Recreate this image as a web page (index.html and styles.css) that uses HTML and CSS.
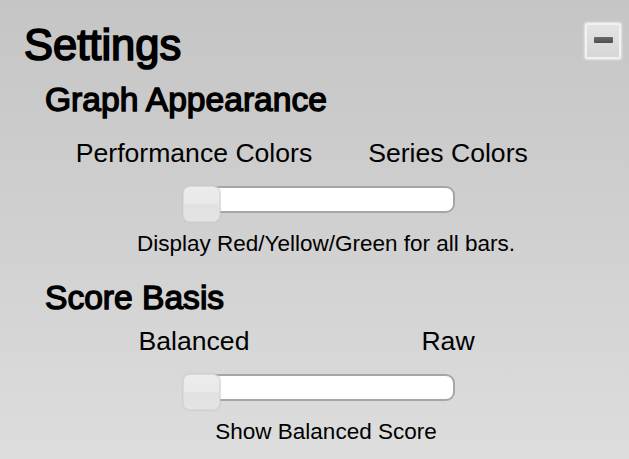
FILE: index.html
```html
<!DOCTYPE html>
<html lang="en">
<head>
<meta charset="utf-8">
<title>Settings</title>
<link rel="stylesheet" href="styles.css">
</head>
<body>
<div class="panel">
  <header class="panel-head">
    <h1 class="title">Settings</h1>
    <button class="collapse" type="button" aria-label="Collapse"><span class="dash"></span></button>
  </header>

  <section class="group group-first">
    <h2 class="group-title">Graph Appearance</h2>
    <div class="options">
      <span class="option">Performance Colors</span>
      <span class="option">Series Colors</span>
    </div>
    <div class="slider">
      <div class="track"></div>
      <div class="thumb"></div>
    </div>
    <p class="caption">Display Red/Yellow/Green for all bars.</p>
  </section>

  <section class="group group-second">
    <h2 class="group-title">Score Basis</h2>
    <div class="options">
      <span class="option">Balanced</span>
      <span class="option">Raw</span>
    </div>
    <div class="slider">
      <div class="track"></div>
      <div class="thumb"></div>
    </div>
    <p class="caption">Show Balanced Score</p>
  </section>
</div>
</body>
</html>
```

FILE: styles.css
```css
html, body {
  margin: 0;
  padding: 0;
}

body {
  width: 629px;
  height: 459px;
  overflow: hidden;
  background: linear-gradient(to bottom, #c5c5c5 0%, #d0d0d0 50%, #dddddd 100%);
  font-family: "Liberation Sans", Arial, sans-serif;
  color: #000;
}

.panel {
  padding-top: 24px;
}

.panel-head {
  display: flex;
  justify-content: space-between;
  align-items: flex-start;
  padding-left: 24px;
  padding-right: 8px;
}

.title {
  margin: 0;
  font-size: 43.5px;
  line-height: 43px;
  font-weight: normal;
  -webkit-text-stroke: 1.7px #000;
}

.collapse {
  width: 36px;
  height: 36px;
  margin: -1px 0 0 0;
  padding: 0;
  border: 2px solid #f2f2f2;
  border-radius: 2px;
  background: linear-gradient(to bottom, #e4e4e4, #d6d6d6);
  box-shadow: 0 0 2px 1px rgba(255, 255, 255, 0.55);
  display: flex;
  align-items: center;
  justify-content: center;
}

.dash {
  display: block;
  width: 19px;
  height: 6px;
  margin-top: -2px;
  background: linear-gradient(to bottom, #6a6a6a, #4e4e4e);
  border-radius: 1px;
}

.group-title {
  margin: 0;
  padding-left: 45px;
  font-size: 33.6px;
  line-height: 33px;
  font-weight: normal;
  -webkit-text-stroke: 1.4px #000;
}

.group-first {
  margin-top: 16px;
}

.group-second {
  margin-top: 26px;
}

.options {
  display: grid;
  grid-template-columns: 254px 254px;
  margin-left: 67px;
  margin-top: 24px;
  font-size: 26.6px;
  line-height: 26.6px;
  text-align: center;
}

.group-second .options {
  margin-top: 14px;
}

.slider {
  position: relative;
  width: 272px;
  height: 36px;
  margin-left: 183px;
  margin-top: 19px;
}

.track {
  margin-top: 6px;
  height: 27px;
  box-sizing: border-box;
  background: #fff;
  border: 2px solid #a6a6a6;
  border-radius: 9px;
}

.thumb {
  position: absolute;
  left: 0;
  top: 0;
  width: 37px;
  height: 36px;
  box-sizing: border-box;
  border: 1px solid #dadada;
  border-radius: 7px;
  background: linear-gradient(to bottom, #ececec 0%, #e9e9e9 50%, #e1e1e1 52%, #e4e4e4 100%);
  box-shadow: 0 0 1px 1px rgba(200, 200, 200, 0.6);
}

.caption {
  margin: 11px 0 0 64px;
  width: 524px;
  font-size: 22.5px;
  line-height: 22.4px;
  text-align: center;
}
```
